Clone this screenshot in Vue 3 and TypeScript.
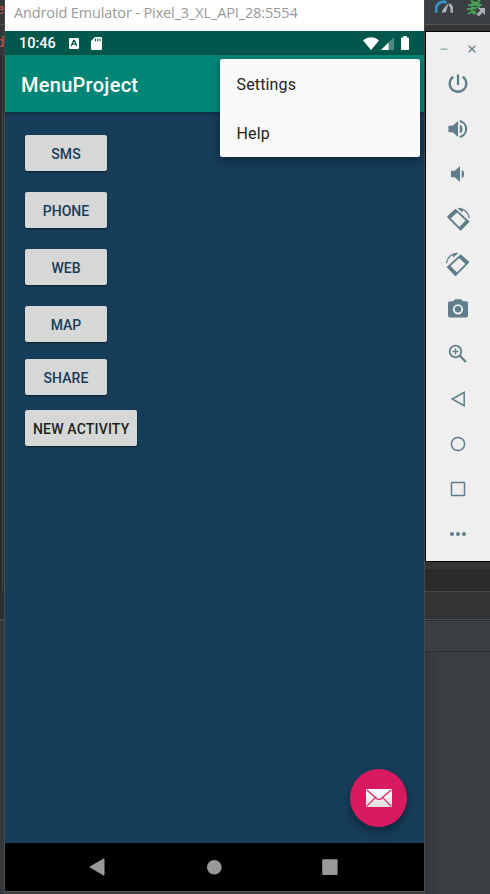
<script setup lang="ts">
interface LaunchButton {
  label: string
  dark?: boolean
}

const windowTitle = 'Android Emulator - Pixel_3_XL_API_28:5554'
const menuItems: string[] = ['Settings', 'Help']
const spaced: LaunchButton[] = [
  { label: 'SMS' },
  { label: 'PHONE' },
  { label: 'WEB' },
  { label: 'MAP' },
]
const stacked: LaunchButton[] = [
  { label: 'SHARE' },
  { label: 'NEW ACTIVITY', dark: true },
]
</script>

<template>
  <div class="desktop">
    <aside class="editor-edge">
      <div class="edge-top"><span>e</span></div>
      <div class="edge-tab"><span>d</span></div>
      <div class="edge-gutter"></div>
      <div class="edge-tail"></div>
      <div class="edge-status"></div>
      <div class="edge-bottom"></div>
    </aside>

    <main class="emulator">
      <div class="window-title"><span>{{ windowTitle }}</span></div>
      <div class="status-bar">
        <span class="clock">10:46</span>
        <svg class="ime" viewBox="0 0 10 11">
          <rect width="10" height="11" rx="1" fill="#fff" />
          <path d="M2.3 8 4.6 2.4h.9L7.7 8M3.3 6.2h3.4" fill="none" stroke="#00574b" stroke-width="1.3" />
        </svg>
        <svg class="sd" viewBox="0 0 11 13">
          <path d="M4 0h6a1 1 0 0 1 1 1v11a1 1 0 0 1-1 1H1a1 1 0 0 1-1-1V4z" fill="#fff" />
          <path d="M4.5 1.5v2.8M6.8 1.5v2.8M9.1 1.5v2.8" stroke="#00574b" stroke-width="1.1" />
        </svg>
        <span class="grow"></span>
        <svg class="wifi" viewBox="0 0 16 13">
          <path d="M0 3.4C4.6-.9 11.4-.9 16 3.4L8 13z" fill="#fff" />
        </svg>
        <svg class="signal" viewBox="0 0 13 13">
          <path d="M0 13 13 0v13z" fill="#4d8981" />
          <path d="M0 13 7.5 5.5V13z" fill="#fff" />
        </svg>
        <svg class="battery" viewBox="0 0 8 14">
          <path d="M2.3 0h3.4v1.4h1.6a.7.7 0 0 1 .7.7v11.2a.7.7 0 0 1-.7.7H.7a.7.7 0 0 1-.7-.7V2.1a.7.7 0 0 1 .7-.7h1.6z" fill="#fff" />
        </svg>
      </div>
      <header class="app-bar">
        <h1>MenuProject</h1>
        <ul class="overflow-menu">
          <li v-for="item in menuItems" :key="item">{{ item }}</li>
        </ul>
      </header>
      <section class="content">
        <div class="group spaced">
          <button v-for="b in spaced" :key="b.label">{{ b.label }}</button>
        </div>
        <div class="group stacked">
          <button v-for="b in stacked" :key="b.label" :class="{ dark: b.dark }">{{ b.label }}</button>
        </div>
        <div class="fab">
          <svg viewBox="0 0 26 18">
            <defs>
              <linearGradient id="paper" x1="0" y1="0" x2="0" y2="1">
                <stop offset="0" stop-color="#fff" />
                <stop offset="1" stop-color="#dedede" />
              </linearGradient>
            </defs>
            <rect width="26" height="18" rx="1" fill="url(#paper)" />
            <path d="M.8 1 11 9.7q2 1.6 4 0L25.2 1M.8 17.2 9.3 8.6M25.2 17.2 16.7 8.6" fill="none" stroke="#d81b60" stroke-width="1.2" />
          </svg>
        </div>
      </section>
      <nav class="nav-bar">
        <svg viewBox="0 0 16 18"><path d="M15 .8v16.4L.8 9z" fill="#999" stroke="#999" stroke-linejoin="round" /></svg>
        <svg viewBox="0 0 16 18"><circle cx="8.3" cy="9.3" r="7.3" fill="#999" /></svg>
        <svg viewBox="0 0 16 18"><rect x=".2" y="1.3" width="15.4" height="15.6" rx="1" fill="#999" /></svg>
      </nav>
    </main>

    <aside class="right">
      <div class="ide-toolbar">
        <svg class="gauge" viewBox="0 0 18 13">
          <path d="M1.8 12.5A7.3 7.3 0 0 1 11.6 2.7" fill="none" stroke="#3592c4" stroke-width="3" />
          <path d="M14.3 4.3A7.3 7.3 0 0 1 16.4 12.5" fill="none" stroke="#afb1b3" stroke-width="2.8" />
          <path d="M13.7 3 10.8 12.5H6.8C7 10 11 5.5 13.7 3z" fill="#afb1b3" />
        </svg>
        <svg class="bug" viewBox="0 0 19 17">
          <path d="M5 1.5h7l1 3v3L8 9l1.5 5.500H8C5 14.500 4 12 4 9V4z" fill="#499c54" />
          <path d="M4 0l2 2M13 0l-2 2M1 5h14M0 9h8M1 14l4-2.500" stroke="#499c54" stroke-width="2" />
          <path d="M5.500 6.500h5M5.500 10h4" stroke="#3c3f41" />
          <path d="M11 8h7v7l-2.400-2.400-3.800 3.800-2.200-2.200 3.800-3.800z" fill="#afb1b3" />
        </svg>
      </div>
      <div class="ide-tabs"></div>
      <div class="tool-panel">
        <div class="window-controls">
          <svg viewBox="0 0 8 8"><path d="M.5 4.2h7" stroke="#a3b2b9" stroke-width="1.6" /></svg>
          <svg viewBox="0 0 8 8"><path d="M.7.7 7.3 7.3M7.3.7.7 7.3" stroke="#607d8b" stroke-width="1.3" /></svg>
        </div>
        <div class="tools">
          <svg viewBox="0 0 24 24"><path d="M12 2.5V13M7.2 4.7a8.3 8.3 0 1 0 9.6 0" fill="none" stroke="#607d8b" stroke-width="2.3" /></svg>
          <svg viewBox="0 0 24 24">
            <path d="M2.5 8.8h4.3L12 3.9v16.2l-5.2-4.900H2.500z" fill="#607d8b" />
            <path d="M13.800 7.500a5 5 0 0 1 0 9z" fill="#607d8b" />
            <path d="M13.800 4.100a8.100 8.100 0 0 1 0 15.800" fill="none" stroke="#607d8b" stroke-width="2.1" />
          </svg>
          <svg viewBox="0 0 24 24">
            <path d="M5 8.8h3.900L14 4v16l-5.100-4.800H5z" fill="#607d8b" />
            <path d="M15.700 7.700a4.900 4.900 0 0 1 0 8.600z" fill="#607d8b" />
          </svg>
          <svg viewBox="0 0 24 24">
            <path d="M9.5 2.9 22.4 14.7 14.7 22.7 2.1 9.8z" fill="none" stroke="#607d8b" stroke-width="1.9" stroke-linejoin="round" />
            <path d="m2.1 9.8 7.400-6.900 2.200 2-7.500 7zM12.700 20.600l7.600-7.800 2.100 1.900-7.700 8z" fill="#607d8b" />
            <path d="M12 1.500c5.600-.5 10.700 4 11.200 9.800" fill="none" stroke="#607d8b" stroke-width="1.3" />
            <path d="m11.600 1 5.800 1.600-1.200 3z" fill="#607d8b" />
          </svg>
          <svg viewBox="0 0 24 24">
            <g transform="translate(23.7) scale(-1 1)">
              <g transform="translate(-.5 .5)">
                <path d="M9.5 2.9 22.4 14.7 14.7 22.7 2.1 9.8z" fill="none" stroke="#607d8b" stroke-width="1.9" stroke-linejoin="round" />
                <path d="m2.1 9.8 7.400-6.900 2.200 2-7.500 7zM12.700 20.600l7.600-7.800 2.100 1.900-7.700 8z" fill="#607d8b" />
              </g>
              <path d="M12 1.500c5.600-.5 10.700 4 11.200 9.800" fill="none" stroke="#607d8b" stroke-width="1.3" />
              <path d="m11.600 1 5.800 1.600-1.200 3z" fill="#607d8b" />
            </g>
          </svg>
          <svg viewBox="0 0 24 24">
            <path d="M9 2.3 7.2 4.3H4a2 2 0 0 0-2 2v12.100a2 2 0 0 0 2 2h16a2 2 0 0 0 2-2V6.300a2 2 0 0 0-2-2h-3.200L15 2.300z" fill="#607d8b" />
            <circle cx="12" cy="12.3" r="4.2" fill="none" stroke="#efefef" stroke-width="1.9" />
          </svg>
          <svg viewBox="0 0 24 24" fill="none" stroke="#607d8b">
            <circle cx="9.5" cy="9.5" r="5.8" stroke-width="1.8" />
            <path d="m13.8 13.8 6.2 6.2" stroke-width="2.3" />
            <path d="M6.5 9.5h6M9.5 6.5v6" stroke-width="1.3" />
          </svg>
          <svg viewBox="0 0 24 24"><path d="M18.2 5.3v13.4L6.2 12z" fill="none" stroke="#607d8b" stroke-width="1.5" /></svg>
          <svg viewBox="0 0 24 24"><circle cx="12" cy="12" r="6.6" fill="none" stroke="#607d8b" stroke-width="1.5" /></svg>
          <svg viewBox="0 0 24 24"><rect x="5.5" y="5.5" width="13" height="13" rx=".5" fill="none" stroke="#607d8b" stroke-width="1.5" /></svg>
          <svg viewBox="0 0 24 24" fill="#607d8b"><circle cx="6" cy="12" r="2" /><circle cx="12" cy="12" r="2" /><circle cx="18" cy="12" r="2" /></svg>
        </div>
      </div>
      <div class="ide-strip"></div>
      <div class="ide-editor"></div>
      <div class="ide-header"></div>
      <div class="ide-row"></div>
      <div class="ide-body"></div>
    </aside>
  </div>
</template>

<style>
body {
  background: #3c3f41;
  overflow: hidden;
}
</style>

<style scoped>
* {
  box-sizing: border-box;
}
svg {
  display: block;
  flex: none;
}
.desktop {
  display: grid;
  grid-template-columns: 5px 419px 66px;
  width: 490px;
  height: 894px;
  background: #3c3f41;
  font-family: Roboto, "Liberation Sans", sans-serif;
}
.editor-edge {
  display: flex;
  flex-direction: column;
  border-right: 1px solid #484a4b;
  overflow: hidden;
  font: 15px "Liberation Sans", sans-serif;
  color: #c75450;
}
.edge-top {
  height: 25px;
  background: #35383a;
  border-bottom: 1px solid #4a4c4d;
}
.edge-tab {
  height: 30px;
  background: #343638;
}
.edge-top span,
.edge-tab span {
  display: block;
  margin-left: -4px;
}
.edge-tab span {
  padding-top: 8px;
}
.edge-gutter {
  height: 536px;
  background: linear-gradient(90deg, #292929 2px, #484848 2px, #484848 3px, #292929 3px);
}
.edge-tail {
  height: 28px;
  background: #2d2e30;
}
.edge-status {
  height: 32px;
  border-top: 2px solid #4a4a4a;
  background: #35383a;
}
.edge-bottom {
  flex: 1;
  border-top: 1px solid #2b2b2b;
  background: #36393b;
}
.emulator {
  display: flex;
  flex-direction: column;
  height: 892px;
  border-bottom: 1px solid #55585a;
}
.window-title {
  display: flex;
  align-items: center;
  height: 31px;
  padding: 0 0 6px 9px;
  background: #fff;
  color: #999;
  font-family: "Open Sans", "Noto Sans", sans-serif;
  font-weight: 400;
  font-size: 14.5px;
  letter-spacing: -0.13px;
  white-space: nowrap;
}
.status-bar {
  display: flex;
  align-items: center;
  height: 24px;
  padding: 0 15px 0 14px;
  background: #00574b;
  color: #fff;
}
.clock {
  width: 50px;
  font-size: 14.5px;
  font-weight: 500;
  line-height: 24px;
  padding-top: 1px;
}
.ime {
  width: 10px;
  height: 11px;
}
.sd {
  width: 11px;
  height: 13px;
  margin-left: 12px;
}
.grow {
  flex: 1;
}
.wifi {
  width: 16px;
  height: 13px;
}
.signal {
  width: 13px;
  height: 13px;
  margin: 0 7px 0 2px;
}
.battery {
  width: 8px;
  height: 14px;
}
.app-bar {
  position: relative;
  z-index: 1;
  display: flex;
  align-items: center;
  height: 57px;
  padding: 2px 16px 0;
  background: #008577;
  box-shadow: 0 1px 3px rgba(0, 0, 0, 0.35);
}
h1 {
  margin: 0;
  color: #fff;
  font-size: 20px;
  font-weight: 500;
  letter-spacing: 0.28px;
}
.overflow-menu {
  position: absolute;
  top: 4px;
  right: 4px;
  width: 200px;
  height: 98px;
  margin: 0;
  padding: 1px 0 0;
  list-style: none;
  background: #fafafa;
  border-radius: 2px;
  box-shadow: 0 3px 9px rgba(0, 0, 0, 0.4);
  color: #222;
  font-size: 16px;
  letter-spacing: 0.15px;
}
.overflow-menu li {
  height: 48.5px;
  padding-left: 16.5px;
  line-height: 49px;
}
.content {
  position: relative;
  height: 731px;
  padding: 22.5px 20px;
  background: #163d59;
}
.group {
  display: flex;
  flex-direction: column;
  align-items: flex-start;
}
.spaced {
  gap: 20.5px;
}
.stacked {
  gap: 14.5px;
  margin-top: 16.5px;
}
button {
  min-width: 82px;
  height: 36.5px;
  padding: 2px 8px 0;
  border: 0;
  border-radius: 2px;
  background: #d6d7d7;
  box-shadow: 0 1px 2px rgba(0, 0, 0, 0.5);
  color: #163d59;
  font: 500 14px Roboto, sans-serif;
  letter-spacing: 0.05px;
  white-space: nowrap;
}
button.dark {
  letter-spacing: 0.18px;
  color: #1e1f1f;
}
.fab {
  position: absolute;
  right: 17px;
  bottom: 16px;
  display: flex;
  align-items: center;
  justify-content: center;
  width: 57px;
  height: 58px;
  border-radius: 50%;
  background: #d81b60;
  box-shadow: 0 5px 8px rgba(0, 0, 0, 0.35);
}
.fab svg {
  width: 26px;
  height: 18px;
}
.nav-bar {
  display: flex;
  align-items: center;
  justify-content: space-between;
  height: 48px;
  padding: 0 86px 0 84px;
  background: #000;
}
.nav-bar svg {
  width: 16px;
  height: 18px;
}
.right {
  display: flex;
  flex-direction: column;
  border-left: 1px solid #454748;
}
.ide-toolbar {
  display: flex;
  height: 25px;
  padding-left: 10px;
  border-bottom: 1px solid #505254;
  background: #3c3f41;
}
.gauge {
  width: 18px;
  height: 13px;
}
.bug {
  width: 19px;
  height: 17px;
  margin-left: 14px;
}
.ide-tabs {
  height: 6px;
  background: #323436;
}
.tool-panel {
  height: 531px;
  border: 1px solid #000;
  border-right: 0;
  background: #efefef;
}
.window-controls {
  display: flex;
  justify-content: space-between;
  height: 30px;
  padding: 13px 14px 0;
}
.window-controls svg {
  width: 8px;
  height: 8px;
}
.tools {
  display: flex;
  flex-direction: column;
  align-items: center;
  gap: 21px;
  padding: 10px 0 0;
}
.tools svg {
  width: 24px;
  height: 24px;
}
.ide-strip {
  height: 7px;
  background: #323436;
}
.ide-editor {
  height: 22px;
  background: #2b2b2b;
}
.ide-header {
  height: 28px;
  border-top: 1px solid #45484a;
  background: #313335;
}
.ide-row {
  height: 32px;
  border-top: 1px solid #4c4e50;
  background: #3c3f41;
  box-shadow: inset 0 1px #2c2e30;
}
.ide-body {
  flex: 1;
  border-top: 1px solid #2d3032;
  background: linear-gradient(90deg, #343739, #3c3f41 16px);
}
</style>
